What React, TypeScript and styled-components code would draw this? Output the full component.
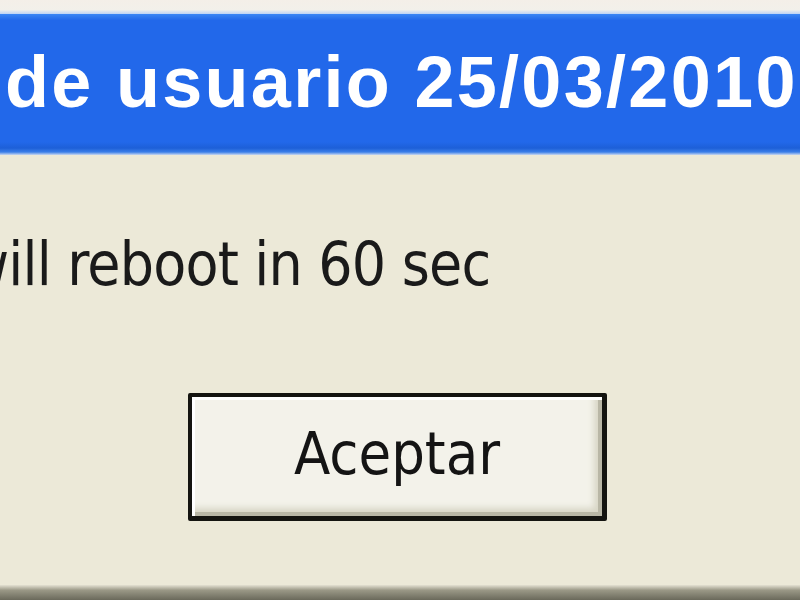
import styled, { createGlobalStyle } from 'styled-components'

const GlobalStyle = createGlobalStyle`
  html, body {
    margin: 0;
    padding: 0;
    overflow: hidden;
    background: #ece9d8;
  }
`

const Window = styled.div`
  width: 800px;
  height: 600px;
  display: flex;
  flex-direction: column;
  background: #ece9d8;
  overflow: hidden;
`

const TopEdge = styled.div`
  height: 14px;
  background: linear-gradient(to bottom, #f4efe8 0%, #f2f0ea 70%, #bcd3f6 100%);
`

const TitleBar = styled.div`
  height: 141px;
  box-sizing: border-box;
  display: flex;
  align-items: flex-start;
  padding: 32px 0 0 5px;
  background: linear-gradient(
    to bottom,
    #3a86f4 0px,
    #2268ea 6px,
    #2268ea 128px,
    #1d5fd8 134px,
    #3a7ee8 138px,
    #c9d8f0 141px
  );
  overflow: hidden;
  white-space: nowrap;
`

const TitleText = styled.span`
  font-family: 'Liberation Sans', Arial, sans-serif;
  font-weight: bold;
  font-size: 72px;
  line-height: 1;
  color: #ffffff;
  letter-spacing: 2.3px;
`

const Body = styled.div`
  flex: 1;
  display: flex;
  flex-direction: column;
`

const Message = styled.div`
  margin-top: 79px;
  margin-left: -35px;
  font-family: 'DejaVu Sans Condensed', 'DejaVu Sans', sans-serif;
  font-size: 60px;
  letter-spacing: -0.8px;
  color: #1a1a1a;
  white-space: nowrap;
  line-height: 1;
`

const ButtonRow = styled.div`
  display: flex;
  padding-left: 188px;
  margin-top: 99px;
`

const Button = styled.button`
  width: 419px;
  height: 128px;
  box-sizing: border-box;
  border: 4px solid #141410;
  border-right-width: 5px;
  border-bottom-width: 5px;
  border-radius: 2px;
  background: #f3f2ea;
  box-shadow:
    inset 3px 3px 0 #ffffff,
    inset -4px -4px 0 #b9b7a6,
    inset -8px -8px 6px #d8d6c6;
  font-family: 'DejaVu Sans Condensed', 'DejaVu Sans', sans-serif;
  font-size: 59px;
  color: #141414;
  padding: 0 0 6px;
`

const BottomEdge = styled.div`
  height: 15px;
  margin-top: auto;
  background: linear-gradient(to bottom, #e4e1d2 0%, #9a9886 35%, #6a695b 100%);
`

export default function App() {
  return (
    <>
      <GlobalStyle />
      <Window>
        <TopEdge />
        <TitleBar>
          <TitleText>de usuario 25/03/2010</TitleText>
        </TitleBar>
        <Body>
          <Message>will reboot in 60 sec</Message>
          <ButtonRow>
            <Button>Aceptar</Button>
          </ButtonRow>
          <BottomEdge />
        </Body>
      </Window>
    </>
  )
}
